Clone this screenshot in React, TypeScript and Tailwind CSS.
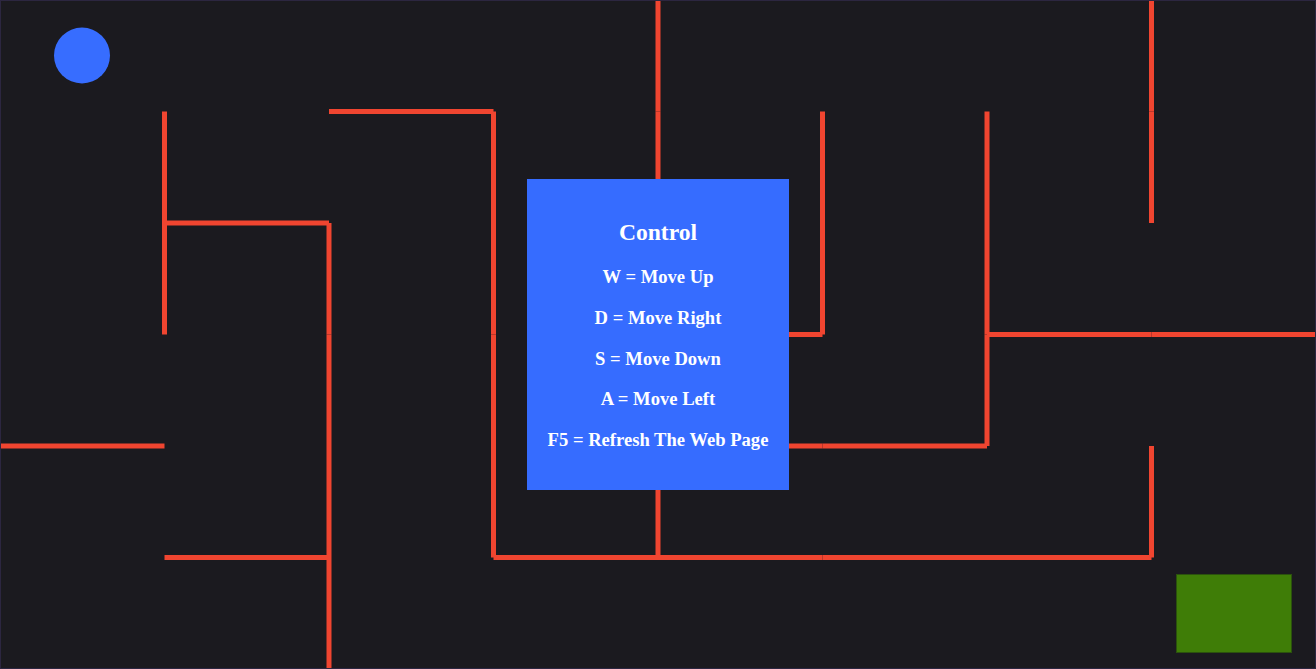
import React from "react";

type Seg = [number, number, number, number];

const walls: Seg[] = [
  [658, 0, 658, 111.5],
  [658, 111.5, 658, 223],
  [658, 446, 658, 557.5],
  [1151.5, 0, 1151.5, 111.5],
  [1151.5, 111.5, 1151.5, 223],
  [329, 111.5, 493.5, 111.5],
  [493.5, 111.5, 493.5, 334.5],
  [493.5, 334.5, 493.5, 557.5],
  [164.5, 111.5, 164.5, 334.5],
  [164.5, 223, 329, 223],
  [329, 223, 329, 334.5],
  [329, 334.5, 329, 669],
  [822.5, 111.5, 822.5, 334.5],
  [658, 334.5, 822.5, 334.5],
  [987, 111.5, 987, 334.5],
  [987, 334.5, 987, 446],
  [987, 334.5, 1151.5, 334.5],
  [1151.5, 334.5, 1316, 334.5],
  [0, 446, 164.5, 446],
  [658, 446, 822.5, 446],
  [822.5, 446, 987, 446],
  [164.5, 557.5, 329, 557.5],
  [493.5, 557.5, 658, 557.5],
  [658, 557.5, 822.5, 557.5],
  [822.5, 557.5, 1151.5, 557.5],
  [1151.5, 446, 1151.5, 557.5],
];

const lines = [
  "W = Move Up",
  "D = Move Right",
  "S = Move Down",
  "A = Move Left",
  "F5 = Refresh The Web Page",
];

export default function App() {
  return (
    <div className="relative h-[669px] w-[1316px] overflow-hidden border border-[#2c2640] bg-[#1b1a1f]">
      <svg
        className="block"
        width={1314}
        height={667}
        viewBox="1 1 1314 667"
      >
        {walls.map(([x1, y1, x2, y2], i) => (
          <line
            key={i}
            x1={x1}
            y1={y1}
            x2={x2}
            y2={y2}
            stroke="#f04530"
            strokeWidth={5}
            strokeLinecap="butt"
          />
        ))}
        <circle cx={82} cy={55.5} r={28} fill="#376dff" />
        <rect
          x={1176.5}
          y={574.5}
          width={115}
          height={78}
          fill="#3f7d07"
          stroke="#2b520d"
          strokeWidth={1}
        />
      </svg>
      <div className="absolute inset-0 flex items-center justify-center">
        <div className="flex h-[311px] w-[262px] flex-col items-center justify-center bg-[#366cff] font-['Liberation_Serif',serif] font-bold text-white">
          <div className="text-[23.6px] leading-[28px]">Control</div>
          <div className="mt-[20px] flex flex-col items-center gap-[18.75px] text-[18.6px] leading-[22px]">
            {lines.map((l) => (
              <div key={l}>{l}</div>
            ))}
          </div>
        </div>
      </div>
    </div>
  );
}
